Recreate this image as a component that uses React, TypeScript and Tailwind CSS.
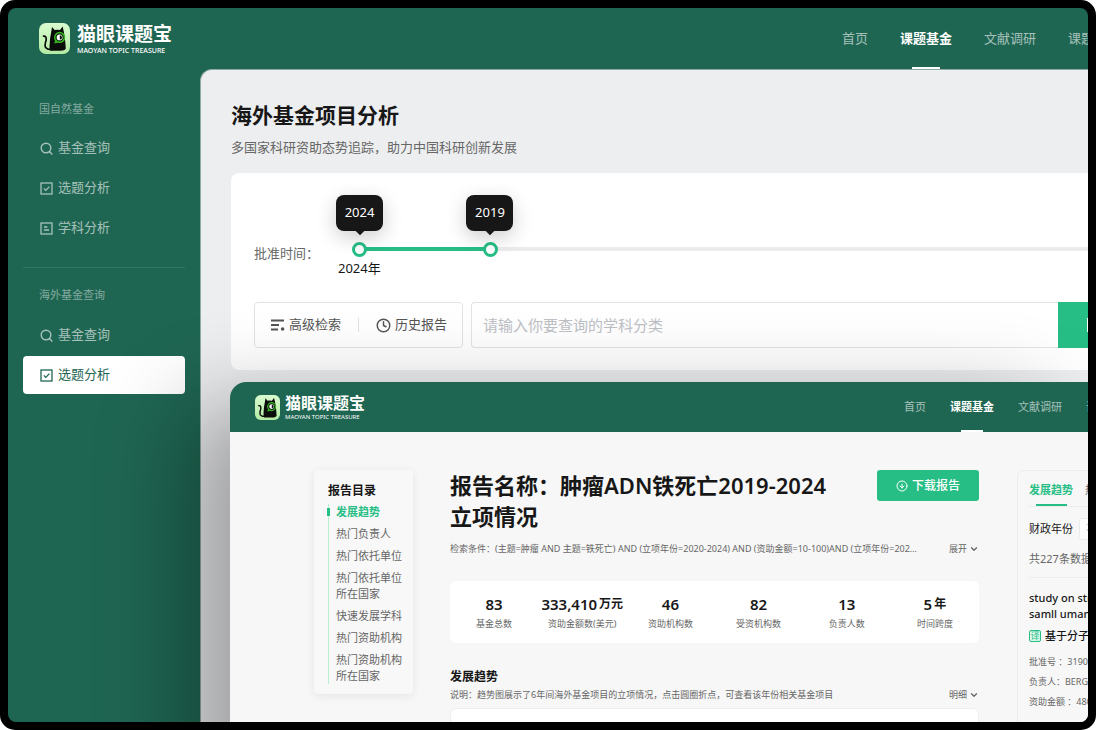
import { ChevronDown, CircleArrowDown, Clock, Search } from "lucide-react";

const navItems = ["首页", "课题基金", "文献调研", "课题申报"];

const fundMenu = [
  { label: "基金查询", icon: "search" },
  { label: "选题分析", icon: "check" },
  { label: "学科分析", icon: "doc" },
];

const overseasMenu = [
  { label: "基金查询", icon: "search" },
  { label: "选题分析", icon: "check", active: true },
];

const catalog = [
  "热门负责人",
  "热门依托单位",
  "热门依托单位所在国家",
  "快速发展学科",
  "热门资助机构",
  "热门资助机构所在国家",
];

const stats = [
  { value: "83", unit: "", label: "基金总数" },
  { value: "333,410", unit: "万元", label: "资助金额数(美元)" },
  { value: "46", unit: "", label: "资助机构数" },
  { value: "82", unit: "", label: "受资机构数" },
  { value: "13", unit: "", label: "负责人数" },
  { value: "5", unit: "年", label: "时间跨度" },
];

function CatLogo({ className }: { className: string }) {
  return (
    <svg viewBox="0 0 31 31" className={className} aria-hidden="true">
      <defs>
        <linearGradient id="logoBg" x1="0" y1="0" x2="0" y2="1">
          <stop offset="0" stopColor="#d9fbd0" />
          <stop offset="1" stopColor="#b4eba4" />
        </linearGradient>
      </defs>
      <rect width="31" height="31" rx="7" fill="url(#logoBg)" />
      <path
        d="M13 4 L15.6 7 Q18.5 6.4 21 7 L23.6 3.6 L24.8 8.5 Q26.4 17 26.8 25.6 Q26 27.8 21 27.8 L12 27.8 Q10 26.4 10.6 22 Q11 14 12.2 9 Z"
        fill="#0a0c0a"
      />
      <path
        d="M4.6 13.2 Q7.6 12.8 7.2 17 Q5.4 22.4 6.6 24.6 Q8.4 27 13 26.6"
        fill="none"
        stroke="#0a0c0a"
        strokeWidth="1.7"
        strokeLinecap="round"
      />
      <circle cx="20.6" cy="14.4" r="4.9" fill="#0d2a0d" stroke="#35b51f" strokeWidth="1.5" />
      <path d="M16.6 17 L15 20.4 L19.6 19.4" fill="#35b51f" />
      <circle cx="20.6" cy="14.4" r="2.9" fill="#fff" />
      <path d="M20.8 12.2 a2.2 2.2 0 0 1 0 4.4 Z" fill="#0a0c0a" />
    </svg>
  );
}

function MenuIcon({ name }: { name: string }) {
  if (name === "search") {
    return (
      <svg width="13" height="13" viewBox="0 0 13 13" fill="none" stroke="currentColor" strokeWidth="1.4">
        <circle cx="6" cy="6" r="4.8" />
        <path d="M9.4 9.4 L12.4 12.4" />
      </svg>
    );
  }
  if (name === "check") {
    return (
      <svg width="13" height="13" viewBox="0 0 13 13" fill="none" stroke="currentColor" strokeWidth="1.3">
        <rect x="1" y="1" width="11" height="11" />
        <path d="M3.8 6.4 L5.8 8.4 L9.4 4.6" />
      </svg>
    );
  }
  return (
    <svg width="13" height="13" viewBox="0 0 13 13" fill="none" stroke="currentColor" strokeWidth="1.3">
      <rect x="1" y="1" width="11" height="11" />
      <path d="M4 5 H7.4 M4 8 H9" />
    </svg>
  );
}

function Menu({ items }: { items: { label: string; icon: string; active?: boolean }[] }) {
  return (
    <ul className="flex flex-col gap-[2px]">
      {items.map(({ label, icon, active }) => (
        <li key={label}>
          <a
            href="#"
            className={`flex h-[38px] items-center gap-[5px] rounded px-[17px] text-[13px] ${
              active ? "bg-white text-[#1f6652]" : "text-white/60"
            }`}
          >
            <MenuIcon name={icon} />
            {label}
          </a>
        </li>
      ))}
    </ul>
  );
}

export default function App() {
  return (
    <div className="h-screen overflow-hidden rounded-[15px] bg-black p-2 font-['Noto_Sans','Noto_Sans_CJK_SC',sans-serif]">
      <div className="relative flex h-full flex-col overflow-hidden rounded-lg bg-[#1f6652]">
        {/* 顶部导航 */}
        <header className="flex h-[61px] shrink-0 items-center pl-[31px]">
          <a href="#" className="flex items-center gap-[7px] text-white">
            <CatLogo className="h-[31px] w-[31px]" />
            <span className="flex flex-col">
              <span className="text-[19px] leading-6 font-bold">猫眼课题宝</span>
              <span className="text-[7px] leading-[10px] font-medium">MAOYAN TOPIC TREASURE</span>
            </span>
          </a>
          <nav className="-mr-8 ml-auto flex h-full shrink-0 gap-8 text-[13px]">
            {navItems.map((item) => (
              <a
                key={item}
                href="#"
                className={`flex h-full flex-col items-center justify-between whitespace-nowrap ${
                  item === "课题基金" ? "font-bold text-white" : "text-white/60"
                }`}
              >
                <span className="pt-5 leading-5">{item}</span>
                {item === "课题基金" && <span className="h-[2px] w-7 bg-white" />}
              </a>
            ))}
          </nav>
        </header>

        <div className="flex min-h-0 flex-1">
          {/* 侧边栏 */}
          <aside className="w-[192px] shrink-0 px-[15px] pt-[30px]">
            <h2 className="mb-[10px] pl-4 text-[11px] leading-5 text-white/45">国自然基金</h2>
            <Menu items={fundMenu} />
            <hr className="mt-5 border-white/10" />
            <h2 className="mt-[17px] mb-[11px] pl-4 text-[11px] leading-5 text-white/45">海外基金查询</h2>
            <Menu items={overseasMenu} />
          </aside>

          <main className="min-w-0 flex-1 overflow-hidden rounded-tl-xl border-t border-l border-[#8fa9a3] bg-[#edeef0] pt-[29px] pl-[30px]">
            <h1 className="text-[21px] leading-8 font-semibold text-[#171717]">海外基金项目分析</h1>
            <p className="mt-[6px] text-[13px] leading-5 text-[#666]">
              多国家科研资助态势追踪，助力中国科研创新发展
            </p>

            <section className="mt-4 -mr-20 rounded-lg bg-white pt-[22px] pr-[18px] pb-[22px] pl-[23px]">
              <div className="flex">
                <span id="yearLabel" className="w-[98px] shrink-0 pt-12 text-[13px] leading-5 text-[#666]">
                  批准时间：
                </span>
                <div className="relative h-[107px] flex-1" role="group" aria-labelledby="yearLabel">
                  <div className="absolute inset-x-2 top-[52px] h-[4px] bg-[#ececee]" />
                  <div className="absolute top-[52px] left-2 h-[4px] w-[calc((100%-15px)/6)] bg-[#27be86]" />
                  {[0, 1].map((value) => (
                    <input
                      key={value}
                      type="range"
                      min={0}
                      max={6}
                      defaultValue={value}
                      aria-label={value === 0 ? "起始年份" : "结束年份"}
                      className="pointer-events-none absolute inset-x-0 top-[46px] h-4 w-full appearance-none bg-transparent [&::-webkit-slider-thumb]:pointer-events-auto [&::-webkit-slider-thumb]:h-[15px] [&::-webkit-slider-thumb]:w-[15px] [&::-webkit-slider-thumb]:appearance-none [&::-webkit-slider-thumb]:rounded-full [&::-webkit-slider-thumb]:border-[3px] [&::-webkit-slider-thumb]:border-solid [&::-webkit-slider-thumb]:border-[#27be86] [&::-webkit-slider-thumb]:bg-white"
                    />
                  ))}
                  <div className="absolute top-0 -left-4 flex h-[36px] w-[47px] items-center justify-center rounded-lg bg-[#171717] text-[13px] text-white shadow-[0_6px_20px_rgba(0,0,0,0.2)]">
                    2024
                    <span className="absolute -bottom-[3px] h-[6px] w-[6px] rotate-45 bg-[#171717]" />
                  </div>
                  <div className="absolute top-0 left-[calc((100%-15px)/6-16px)] flex h-[36px] w-[47px] items-center justify-center rounded-lg bg-[#171717] text-[13px] text-white shadow-[0_6px_20px_rgba(0,0,0,0.2)]">
                    2019
                    <span className="absolute -bottom-[3px] h-[6px] w-[6px] rotate-45 bg-[#171717]" />
                  </div>
                  <span className="absolute top-[63px] -left-[14px] text-[13px] leading-5 text-[#171717]">2024年</span>
                </div>
              </div>

              <div className="flex items-start gap-2">
                <div className="flex h-[46px] w-[209px] shrink-0 items-center justify-between rounded border border-[#e2e3e5] px-[15px] text-[13px] text-[#555]">
                  <button type="button" className="flex items-center gap-1">
                    <svg width="15" height="14" viewBox="0 0 15 14" fill="none" stroke="currentColor" strokeWidth="1.9">
                      <path d="M1 2.5 H14 M1 7 H9 M1 11.5 H8" />
                      <circle cx="12.6" cy="11" r="1.8" fill="currentColor" stroke="none" />
                    </svg>
                    高级检索
                  </button>
                  <span className="h-[14px] w-px bg-[#e2e3e5]" />
                  <button type="button" className="flex items-center gap-1">
                    <Clock size={15} strokeWidth={2.4} />
                    历史报告
                  </button>
                </div>
                <form className="flex flex-1" onSubmit={(e) => e.preventDefault()}>
                  <input
                    type="text"
                    aria-label="学科分类"
                    placeholder="请输入你要查询的学科分类"
                    className="h-[46px] min-w-0 flex-1 rounded-l border border-r-0 border-[#e2e3e5] px-[11px] text-[15px] placeholder:text-[#bdc0c5]"
                  />
                  <button
                    type="submit"
                    aria-label="检索"
                    className="flex h-[46px] w-[92px] items-center bg-[#27be86] pl-7 text-white"
                  >
                    <svg width="14" height="14" viewBox="0 0 14 14" fill="none" stroke="currentColor" strokeWidth="2">
                      <path d="M2 1 H12 V13 H2 Z M5 5 H9 M5 9 H9" />
                    </svg>
                  </button>
                </form>
              </div>
            </section>
          </main>
        </div>

        {/* 报告窗口 */}
        <div className="absolute top-[374px] right-0 -bottom-20 left-[222px] flex flex-col rounded-tl-2xl bg-[#f7f7f7] shadow-[-45px_22px_90px_rgba(0,0,0,0.33)]">
          <header className="flex h-[50px] shrink-0 items-center rounded-tl-2xl bg-[#1f6652] pl-[25px]">
            <a href="#" className="flex items-center gap-[5px] text-white">
              <CatLogo className="h-[25px] w-[25px]" />
              <span className="flex flex-col">
                <span className="text-[16px] leading-5 font-bold">猫眼课题宝</span>
                <span className="text-[6px] leading-[8px]">MAOYAN TOPIC TREASURE</span>
              </span>
            </a>
            <nav className="-mr-[42px] ml-auto flex h-full shrink-0 gap-6 text-[11px]">
              {navItems.map((item) => (
                <a
                  key={item}
                  href="#"
                  className={`flex h-full flex-col items-center justify-between whitespace-nowrap ${
                    item === "课题基金" ? "font-bold text-white" : "text-white/60"
                  }`}
                >
                  <span className="pt-4 leading-[18px]">{item}</span>
                  {item === "课题基金" && <span className="h-[2px] w-[22px] bg-white" />}
                </a>
              ))}
            </nav>
          </header>

          <div className="flex min-h-0 flex-1 items-start overflow-hidden pt-[38px] pl-[84px]">
            {/* 报告目录 */}
            <aside className="w-[99px] shrink-0 rounded bg-[#f8f8f8] pt-3 pb-[10px] pl-[14px] shadow-[0_2px_10px_rgba(0,0,0,0.08)]">
              <h2 className="text-[12px] leading-[18px] font-semibold text-[#171717]">报告目录</h2>
              <ul className="mt-1 flex flex-col gap-[6px] border-l border-[#b5f0cf] pl-[7px] text-[11px] leading-4 text-[#666]">
                <li className="relative font-semibold text-[#27be86]">
                  <span className="absolute top-1 -left-[9px] h-2 w-[3px] bg-[#27be86]" />
                  <a href="#">发展趋势</a>
                </li>
                {catalog.map((item) => (
                  <li key={item} className="w-[66px]">
                    <a href="#">{item}</a>
                  </li>
                ))}
              </ul>
            </aside>

            {/* 报告内容 */}
            <article className="ml-[37px] min-w-0 flex-1">
              <div className="flex items-start justify-between">
                <h1 className="text-[22px] leading-[31px] font-semibold whitespace-nowrap text-[#171717]">
                  报告名称：肿瘤ADN铁死亡2019-2024
                  <br />
                  立项情况
                </h1>
                <button
                  type="button"
                  className="flex h-[31px] w-[102px] shrink-0 items-center justify-center gap-1 rounded-[3px] bg-[#27be86] text-[12px] font-medium text-white"
                >
                  <CircleArrowDown size={12} />
                  下载报告
                </button>
              </div>
              <div className="mt-[10px] flex items-center justify-between text-[9px] leading-[14px] text-[#666]">
                <p className="w-[489px] truncate">
                  检索条件：(主题=肿瘤 AND 主题=铁死亡) AND (立项年份=2020-2024) AND (资助金额=10-100)AND (立项年份=202…
                </p>
                <button type="button" className="flex items-center gap-[2px]">
                  展开
                  <ChevronDown size={10} strokeWidth={3} />
                </button>
              </div>

              <dl className="mt-[25px] grid h-[62px] grid-cols-6 items-center rounded-md bg-white">
                {stats.map(({ value, unit, label }) => (
                  <div key={label} className="flex flex-col-reverse items-center whitespace-nowrap">
                    <dt className="text-[9px] leading-4 text-[#666]">{label}</dt>
                    <dd className="flex items-center gap-[2px] text-[15px] leading-6 font-semibold text-[#171717]">
                      {value}
                      {unit && <span className="text-[12px]">{unit}</span>}
                    </dd>
                  </div>
                ))}
              </dl>

              <h2 className="mt-[25px] text-[12px] leading-[18px] font-semibold text-[#171717]">发展趋势</h2>
              <div className="mt-[2px] flex items-center justify-between text-[9px] leading-[14px] text-[#666]">
                <p>说明：趋势图展示了6年间海外基金项目的立项情况，点击圆圈折点，可查看该年份相关基金项目</p>
                <button type="button" className="flex items-center gap-[2px]">
                  明细
                  <ChevronDown size={10} strokeWidth={3} />
                </button>
              </div>
              <div className="mt-[6px] h-40 rounded-md border border-[#eee] bg-white" />
            </article>

            {/* 趋势面板 */}
            <section className="-mr-[129px] ml-[38px] w-[200px] shrink-0 rounded-md border border-[#ececec] pt-[10px] pb-40 pl-[11px] text-[11px] text-[#171717]">
              <div className="flex gap-3 border-b border-[#ececec]">
                <a href="#" className="flex flex-col items-center font-semibold text-[#27be86]">
                  <span className="pb-[5px] leading-[18px]">发展趋势</span>
                  <span className="h-[2px] w-[31px] bg-[#27be86]" />
                </a>
                <a href="#" className="leading-[18px] text-[#666]">热门负责人</a>
              </div>
              <label className="mt-[11px] flex items-center gap-[6px]">
                财政年份
                <select className="h-[22px] w-20 appearance-none rounded-[3px] border border-[#ececec] bg-white px-[6px] text-[#bbb]">
                  <option>不限</option>
                </select>
              </label>
              <p className="mt-[10px] border-b border-[#ececec] pb-[9px] leading-[18px] text-[#666]">共227条数据</p>
              <h3 className="mt-3 font-medium leading-4">
                study on structure of
                <br />
                samll umanned
              </h3>
              <p className="mt-[6px] flex items-center gap-1 leading-4 font-medium whitespace-nowrap">
                <span className="flex h-3 w-3 items-center justify-center rounded-[2px] border border-[#27be86] bg-[#d9f7ea] text-[9px] font-normal text-[#27be86]">
                  译
                </span>
                基于分子结构
              </p>
              <ul className="mt-2 text-[9px] leading-5 text-[#666]">
                <li>批准号 ：31900123</li>
                <li>负责人：BERGER</li>
                <li>资助金额 ：480,000</li>
              </ul>
            </section>
          </div>
        </div>
      </div>
    </div>
  );
}
